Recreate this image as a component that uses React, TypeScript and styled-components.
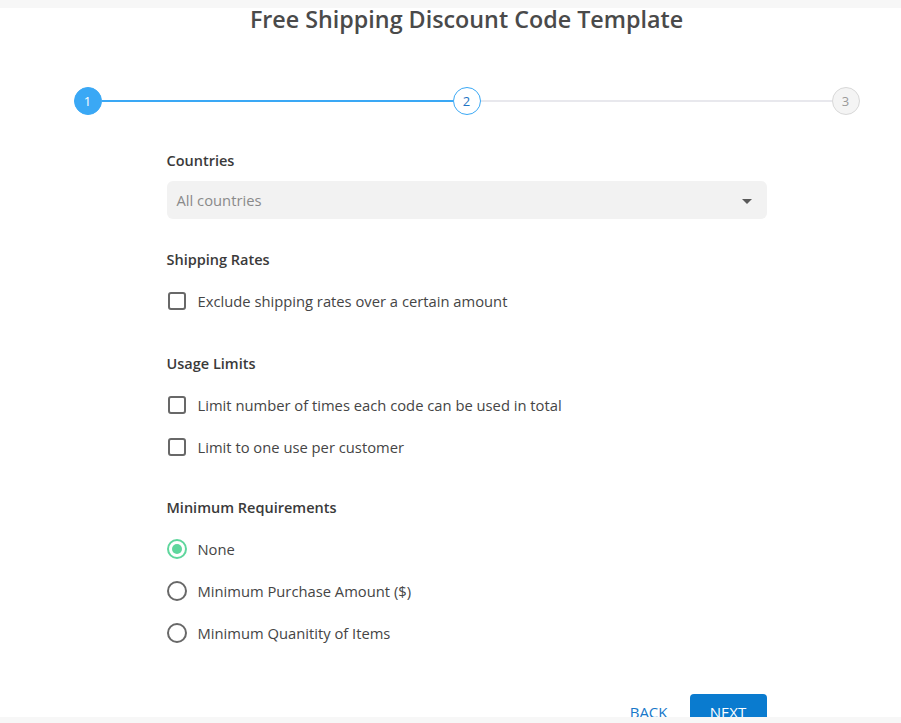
import React, { useState } from 'react';
import styled, { createGlobalStyle } from 'styled-components';

const GlobalStyle = createGlobalStyle`
  html, body {
    margin: 0;
    padding: 0;
    background: #f7f7f7;
    overflow: hidden;
  }
  body {
    font-family: "Open Sans", Lato, sans-serif;
    color: #444;
  }
`;

const Page = styled.div`
  padding: 8px 0 6px;
  width: 933px;
`;

const Card = styled.div`
  background: #ffffff;
  height: 709px;
  overflow: hidden;
  display: flex;
  flex-direction: column;
  align-items: center;
`;

const Title = styled.h1`
  margin: 0;
  font-size: 23.3px;
  line-height: 22px;
  font-weight: 600;
  color: #4a4a4a;
`;

const Stepper = styled.div`
  display: flex;
  align-items: center;
  width: 786px;
  margin-top: 57px;
`;

const StepCircle = styled.div<{ $state: 'done' | 'active' | 'todo' }>`
  width: 28px;
  height: 28px;
  box-sizing: border-box;
  border-radius: 50%;
  flex-shrink: 0;
  display: flex;
  align-items: center;
  justify-content: center;
  font-size: 13px;
  background: ${({ $state }) =>
    $state === 'done' ? '#3aa8f5' : $state === 'active' ? '#ffffff' : '#f4f4f4'};
  border: 1px solid
    ${({ $state }) =>
      $state === 'done' ? '#3aa8f5' : $state === 'active' ? '#3aa8f5' : '#d8d8d8'};
  color: ${({ $state }) =>
    $state === 'done' ? '#ffffff' : $state === 'active' ? '#1f74c4' : '#9a9a9a'};
`;

const StepLine = styled.div<{ $done: boolean }>`
  flex: 1;
  height: 2px;
  background: ${({ $done }) => ($done ? '#3aa8f5' : '#e8e8ed')};
`;

const Form = styled.div`
  width: 600px;
  margin-top: 36px;
  display: flex;
  flex-direction: column;
`;

const Section = styled.div<{ $shift?: number }>`
  display: flex;
  flex-direction: column;
  margin-top: ${({ $shift }) => $shift ?? 0}px;
  margin-bottom: 38px;
`;

const Label = styled.div<{ $gap?: number }>`
  font-size: 14.5px;
  line-height: 20px;
  font-weight: 600;
  color: #3a3a3a;
  margin-bottom: ${({ $gap }) => $gap ?? 19}px;
`;

const Select = styled.div`
  height: 38px;
  border-radius: 6px;
  background: #f2f2f2;
  display: flex;
  align-items: center;
  justify-content: space-between;
  padding: 0 15px 0 10px;
  font-size: 14.75px;
  color: #8a8a8a;
`;

const Caret = styled.span`
  width: 0;
  height: 0;
  border-left: 5px solid transparent;
  border-right: 5px solid transparent;
  border-top: 5px solid #5a5a5a;
  margin-top: 2px;
`;

const Options = styled.div`
  display: flex;
  flex-direction: column;
  gap: 18px;
`;

const Option = styled.label`
  display: flex;
  align-items: center;
  height: 24px;
  gap: 12px;
  font-size: 14.75px;
  color: #454545;
  cursor: pointer;
`;

const Box = styled.span`
  width: 18px;
  height: 18px;
  box-sizing: border-box;
  border: 2px solid #686868;
  border-radius: 3px;
  margin-left: 1px;
  flex-shrink: 0;
`;

const Radio = styled.span<{ $checked: boolean }>`
  width: 20px;
  height: 20px;
  box-sizing: border-box;
  border-radius: 50%;
  margin-right: -1px;
  border: 2px solid ${({ $checked }) => ($checked ? '#5fd69d' : '#686868')};
  flex-shrink: 0;
  display: flex;
  align-items: center;
  justify-content: center;
  &::after {
    content: '';
    width: 10px;
    height: 10px;
    border-radius: 50%;
    background: #5fd69d;
    display: ${({ $checked }) => ($checked ? 'block' : 'none')};
  }
`;

const Actions = styled.div`
  display: flex;
  justify-content: flex-end;
  align-items: center;
  gap: 22px;
  margin-top: 11px;
`;

const BackButton = styled.button`
  border: none;
  background: none;
  padding: 0;
  font-family: inherit;
  font-size: 15px;
  color: #1778c9;
`;

const NextButton = styled.button`
  border: none;
  width: 77px;
  height: 36px;
  border-radius: 4px;
  background: #0a7bcf;
  color: #ffffff;
  font-family: inherit;
  font-size: 15px;
  padding: 0;
`;

const radios = ['None', 'Minimum Purchase Amount ($)', 'Minimum Quanitity of Items'];

export default function App() {
  const [choice, setChoice] = useState(0);
  return (
    <>
      <GlobalStyle />
      <Page>
        <Card>
          <Title>Free Shipping Discount Code Template</Title>
          <Stepper>
            <StepCircle $state="done">1</StepCircle>
            <StepLine $done />
            <StepCircle $state="active">2</StepCircle>
            <StepLine $done={false} />
            <StepCircle $state="todo">3</StepCircle>
          </Stepper>
          <Form>
            <Section>
              <Label $gap={10}>Countries</Label>
              <Select>
                All countries
                <Caret />
              </Select>
            </Section>
            <Section $shift={-7}>
              <Label>Shipping Rates</Label>
              <Options>
                <Option>
                  <Box />
                  Exclude shipping rates over a certain amount
                </Option>
              </Options>
            </Section>
            <Section $shift={3}>
              <Label>Usage Limits</Label>
              <Options>
                <Option>
                  <Box />
                  Limit number of times each code can be used in total
                </Option>
                <Option>
                  <Box />
                  Limit to one use per customer
                </Option>
              </Options>
            </Section>
            <Section $shift={1}>
              <Label>Minimum Requirements</Label>
              <Options>
                {radios.map((r, i) => (
                  <Option key={r} onClick={() => setChoice(i)}>
                    <Radio $checked={choice === i} />
                    {r}
                  </Option>
                ))}
              </Options>
            </Section>
            <Actions>
              <BackButton>BACK</BackButton>
              <NextButton>NEXT</NextButton>
            </Actions>
          </Form>
        </Card>
      </Page>
    </>
  );
}
